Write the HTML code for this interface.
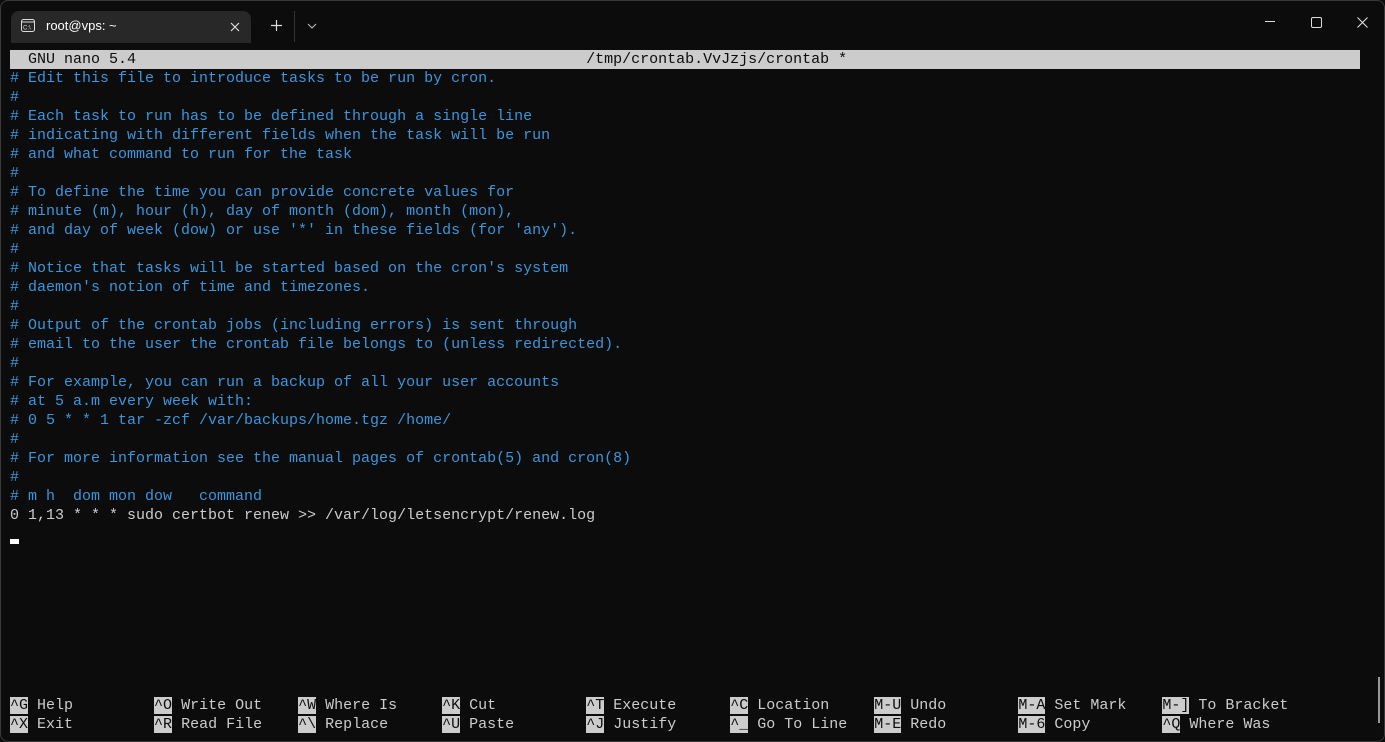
<!DOCTYPE html>
<html><head><meta charset="utf-8"><style>
html,body{margin:0;padding:0;width:1385px;height:742px;overflow:hidden;background:#0c0c0c;}
.win{position:absolute;left:0;top:0;width:1383px;height:740px;border:1px solid #3a3a3a;border-radius:8px;background:#0c0c0c;overflow:hidden}
.tab{position:absolute;left:10px;top:10px;width:240px;height:32px;background:#282828;border-radius:8px 8px 0 0}
.tab .t{position:absolute;left:35px;top:7px;font:13px "Liberation Sans",sans-serif;color:#fff}
pre{position:absolute;left:9px;top:49px;margin:0;font:15px/19px "Liberation Mono",monospace;color:#cccccc;white-space:pre}
.b{color:#3a96dd}
.h{background:#cccccc;color:#0c0c0c}
.bar{background:#cccccc;color:#0c0c0c;display:inline-block;width:1350px}
.cur{position:absolute;left:9px;top:538px;width:9px;height:5px;background:#fff}
</style></head><body><div class="win">
<div class="tab">
<svg style="position:absolute;left:10px;top:8px" width="14" height="13" viewBox="0 0 14 13"><rect x="0.5" y="0.5" width="13" height="12" rx="2" fill="none" stroke="#ddd"/><line x1="0.5" y1="3" x2="13.5" y2="3" stroke="#ddd"/><text x="2" y="10.5" font-size="6" fill="#ddd" font-family="Liberation Sans">C:\</text></svg>
<span class="t">root@vps: ~</span>
<svg style="position:absolute;left:219px;top:11px" width="10" height="10"><path d="M1 1L9 9M9 1L1 9" stroke="#ddd" stroke-width="1.2"/></svg>
</div>
<svg style="position:absolute;left:270px;top:19px" width="11" height="11"><path d="M5.5 0V11M0 5.5H11" stroke="#ddd" stroke-width="1.2"/></svg>
<div style="position:absolute;left:293px;top:10px;width:1px;height:31px;background:#333"></div>
<svg style="position:absolute;left:306px;top:22px" width="10" height="6"><path d="M1 1L5 5L9 1" stroke="#bbb" fill="none" stroke-width="1.1"/></svg>
<div style="position:absolute;left:1264px;top:20px;width:10px;height:1px;background:#ddd"></div>
<div style="position:absolute;left:1310px;top:16px;width:9px;height:9px;border:1px solid #ddd;border-radius:2px"></div>
<svg style="position:absolute;left:1356px;top:16px" width="11" height="11"><path d="M0.5 0.5L10.5 10.5M10.5 0.5L0.5 10.5" stroke="#ddd" stroke-width="1.1"/></svg>
<pre><span class="bar">  GNU nano 5.4                                                  /tmp/crontab.VvJzjs/crontab *                                                       </span>
<span class="b"># Edit this file to introduce tasks to be run by cron.
#
# Each task to run has to be defined through a single line
# indicating with different fields when the task will be run
# and what command to run for the task
#
# To define the time you can provide concrete values for
# minute (m), hour (h), day of month (dom), month (mon),
# and day of week (dow) or use '*' in these fields (for 'any').
#
# Notice that tasks will be started based on the cron's system
# daemon's notion of time and timezones.
#
# Output of the crontab jobs (including errors) is sent through
# email to the user the crontab file belongs to (unless redirected).
#
# For example, you can run a backup of all your user accounts
# at 5 a.m every week with:
# 0 5 * * 1 tar -zcf /var/backups/home.tgz /home/
#
# For more information see the manual pages of crontab(5) and cron(8)
#
# m h  dom mon dow   command</span>
0 1,13 * * * sudo certbot renew &gt;&gt; /var/log/letsencrypt/renew.log









<span class="h">^G</span> Help         <span class="h">^O</span> Write Out    <span class="h">^W</span> Where Is     <span class="h">^K</span> Cut          <span class="h">^T</span> Execute      <span class="h">^C</span> Location     <span class="h">M-U</span> Undo        <span class="h">M-A</span> Set Mark    <span class="h">M-]</span> To Bracket
<span class="h">^X</span> Exit         <span class="h">^R</span> Read File    <span class="h">^\</span> Replace      <span class="h">^U</span> Paste        <span class="h">^J</span> Justify      <span class="h">^_</span> Go To Line   <span class="h">M-E</span> Redo        <span class="h">M-6</span> Copy        <span class="h">^Q</span> Where Was</pre>
<div class="cur"></div>
<div style="position:absolute;left:1377px;top:676px;width:2px;height:46px;background:#999"></div>
</div></body></html>
